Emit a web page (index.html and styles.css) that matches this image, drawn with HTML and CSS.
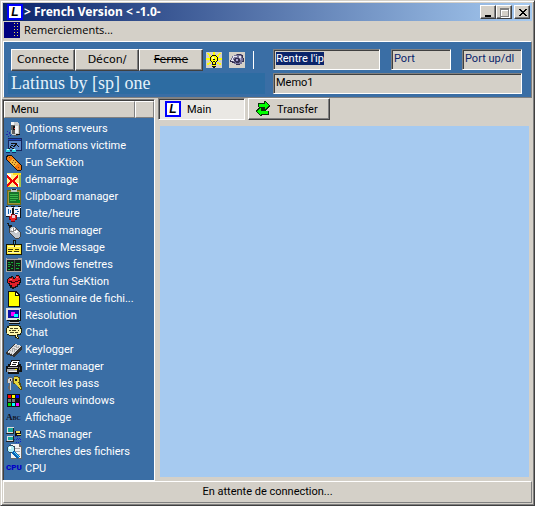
FILE: index.html
```
<!DOCTYPE html>
<html lang="fr">
<head>
<meta charset="utf-8">
<meta name="viewport" content="width=device-width, initial-scale=1">
<title>&gt; French Version &lt; -1.0-</title>
<link rel="stylesheet" href="styles.css">
</head>
<body>
<div class="window">
  <header class="titlebar">
    <span class="logo">L</span>
    <h1 class="title">&gt; French Version &lt; -1.0-</h1>
    <div class="controls">
      <button class="control" aria-label="Minimize"><svg viewBox="0 0 13 11"><path d="M3 8h6v2H3z" fill="#000"/></svg></button>
      <button class="control" aria-label="Maximize" disabled><svg viewBox="0 0 13 11"><path d="M3 2h9v9H3zM4 4v6h7V4z" fill="#fff" fill-rule="evenodd"/><path d="M2 1h9v9H2zM3 3v6h7V3z" fill="#808080" fill-rule="evenodd"/></svg></button>
      <button class="control close" aria-label="Close"><svg viewBox="0 0 13 11"><path d="M3 2h2v1h1v1h2V3h1V2h2v1h-1v1H9v1H8v1h1v1h1v1h1v1H9V8H8V7H6v1H5v1H3V8h1V7h1V6h1V5H5V4H4V3H3z" fill="#000"/></svg></button>
    </div>
  </header>

  <nav class="menubar">
    <svg class="grip" viewBox="0 0 16 16"><path d="M0 0h16v16H0z" fill="#000080"/><path d="M10.500 1v15M13.500 1v15" stroke="#e6dc50" stroke-dasharray="1 2"/></svg>
    <button class="menu-item">Remerciements...</button>
  </nav>

  <section class="toolbar">
    <div class="toolbar-left">
      <div class="actions">
        <button class="push">Connecte</button>
        <button class="push">Décon/</button>
        <button class="push"><s>Ferme</s></button>
        <button class="tool" aria-label="Astuce"><svg class="icon" viewBox="0 0 16 16"><path d="M0 0h16v16H0z" fill="#d4d0c8"/><path d="M7 0h2v3H7zM1 1h2v1h1v1h1v2H3V3H2V2H1zM13 1h2v1h-1v1h-1v2h-2V3h1V2h1zM0 6h4v2H0zM12 6h4v2h-4zM3 10h2v2H3v1H1v-2h2zM11 10h2v1h2v2h-2v-1h-2z" fill="#ff0"/><path d="M6 3h4v1h1v1h1v4h-1v1h-1v5H6v-5H5V9H4V5h1V4h1z" fill="#ff0"/><path d="M6 3h4v1H6zM5 4h1v1H5zM10 4h1v1h-1zM4 5h1v4H4zM11 5h1v4h-1zM5 9h1v1H5zM10 9h1v1h-1zM6 10h1v2H6zM9 10h1v2H9zM6 12h4v1H6zM6 14h4v1H6zM7 15h2v1H7zM7 7h2v1H7zM7 9h2v1H7z" fill="#111"/><path d="M6 5h2v2H6z" fill="#ffffb0"/></svg></button>
        <button class="tool" aria-label="Voir"><svg class="icon" viewBox="0 0 16 16"><path d="M0 0h16v16H0z" fill="#d4d0c8"/><path d="M5 3h2V2h6v1h1v3h1v4h-2v2h-2v1H7v-1H5v-1H3v-1H1V8h1V6h1V4h2z" fill="#77749a"/><path d="M3 6h1V4h4v1H5v1H4v2h3v1H2V8h1zM10 4h2v2h-2z" fill="#e6e6f0"/><path d="M8 2h4v1H8zM12 3h2v3h-1V4h-1zM6 6h4v1h1v3h-1v1H7v-1H6V9H5V7h1zM14 6h1v4h-2V9h1zM1 8h1v1h2v1h2v1H3v-1H1zM7 12h4v1H7z" fill="#343052"/><path d="M7 7h2v2H7zM11 6h1v2h-1z" fill="#aaa5d8"/></svg></button>
        <span class="divider"></span>
      </div>
      <p class="banner">Latinus by [sp] one</p>
    </div>
    <div class="fields">
      <div class="field-row">
        <input class="field ip" id="ip" type="text" value="Rentre l'ip" aria-label="IP">
        <input class="field port" type="text" value="Port" aria-label="Port">
        <input class="field port" type="text" value="Port up/dl" aria-label="Port up/dl">
      </div>
      <input class="field memo" type="text" value="Memo1" aria-label="Memo">
    </div>
  </section>

  <main class="content">
    <aside class="sidebar">
      <div class="list-head"><span class="head-cell">Menu</span><span class="head-cell"></span></div>
      <ul class="list">
        <li><button class="entry"><svg class="icon" viewBox="0 0 16 16"><path d="M5 1h6l2 2v10l-4 2-4-2z" fill="#ccc"/><path d="M5 1h3v4H5zM9 5h3v7H9z" fill="#f4f4f4"/><path d="M5 4h4v9H6V9H5zM13 4h1v9h-1zM8 14h4v1H8z" fill="#606060"/><path d="M7 5h2v4H7zM10 13h4v1h-4z" fill="#111"/><path d="M8 7h1v1H8z" fill="#e44"/><path d="M1 10h1v1H1zM3 11h1v2H3zM0 13h2v1H0zM4 14h1v1H4zM2 15h1v1H2z" fill="#2424a8"/></svg>Options serveurs</button></li>
        <li><button class="entry"><svg class="icon" viewBox="0 0 16 16"><path d="M2 0h14v13H2z" fill="#17265f"/><path d="M3 3h12v9H3z" fill="#5b88c6"/><path d="M2 1h13v1H2z" fill="#1d43c0"/><path d="M4 9l2-2 2 2 2-3 3 3M2 12l3-3 4 3M5 5h6" stroke="#111" fill="none"/><path d="M0 11h4v3H0zM6 11h4v3H6z" fill="#34d6e8"/><path d="M1 11h2v1H1zM7 11h2v1H7z" fill="#dff"/><path d="M0 14h4v1H0zM6 14h4v1H6z" fill="#126"/></svg>Informations victime</button></li>
        <li><button class="entry"><svg class="icon" viewBox="0 0 16 16"><path d="M1 0h4l11 11v3l-2 2h-3L0 5V2z" fill="#111"/><path d="M2 1h3l10 10v3l-1 1h-3L1 5V2z" fill="#f57a10"/><path d="M7 4l5 5-4 3-5-5z" fill="#f4b53a"/><path d="M7 5h1v1H7zM9 7h1v1H9zM6 7h1v1H6zM8 9h1v1H8zM3 2h1v1H3zM12 12h1v1h-1z" fill="#8a4b10"/></svg>Fun SeKtion</button></li>
        <li><button class="entry"><svg class="icon" viewBox="0 0 16 16"><path d="M1 1h14v14H1z" fill="#fff08a"/><path d="M1 2h4v3H1zM9 11h5v3H9z" fill="#fff"/><path d="M7 1h8v2H7zM1 12h3v3H1z" fill="#ffdc20"/><path d="M13 3h2v12h-2z" fill="#a7bf4c"/><path d="M1 4l11 10M12 4L1 14" stroke="#e00" stroke-width="2"/></svg>démarrage</button></li>
        <li><button class="entry"><svg class="icon" viewBox="0 0 16 16"><path d="M1 1h14v15H1z" fill="#716b13"/><path d="M2 2h12v13H2z" fill="#a09640"/><path d="M3 3h10v11H3z" fill="#15712a"/><path d="M5 0h6v3H5z" fill="#bcc8c2"/><path d="M6 0h4v1H6z" fill="#223"/><path d="M4 5h8v1H4zM4 7h8v1H4zM4 9h8v1H4zM4 11h6v1H4z" fill="#3ab64a"/><path d="M11 11h3v3h-3z" fill="#082"/></svg>Clipboard manager</button></li>
        <li><button class="entry"><svg class="icon" viewBox="0 0 16 16"><path d="M0 1h7v10H0zM8 1h7v10H8z" fill="#eef0fb"/><path d="M0 0h2v1H0zM5 0h4v1H5zM12 0h3v1h-3zM6 2h2v9H6zM14 2h1v10h-1zM0 10h5v1H0z" fill="#111"/><path d="M2 3h1v5H2zM4 4h1v3H4zM9 3h3v1H9zM11 5h2v1h-2zM9 7h3v1H9z" fill="#155ea5"/><path d="M5 8h4v1h2v5h-2v2H5v-2H3v-4h2z" fill="#7d0710"/><path d="M5 9h4v1h1v3H9v2H5v-2H4v-3h1z" fill="#ed2024"/><path d="M6 9h3v3H6z" fill="#f2ced3"/></svg>Date/heure</button></li>
        <li><button class="entry"><svg class="icon" viewBox="0 0 16 16"><path d="M1 0h1v2h3v1H3v2h2" stroke="#171717" fill="none"/><path d="M4 4h5l6 6v4l-3 2H9l-6-7V5z" fill="#444"/><path d="M5 4h4l5 6v3l-2 2H9L4 9V5z" fill="#c4c9ce"/><path d="M6 5h3l3 4-2 1-5-3z" fill="#fff"/><path d="M4 8h3V5M8 8l3-2" stroke="#888" fill="none"/></svg>Souris manager</button></li>
        <li><button class="entry"><svg class="icon" viewBox="0 0 16 16"><path d="M0 4h16v11H0z" fill="#161600"/><path d="M1 5h14v9H1z" fill="#ffeb3e"/><path d="M2 6h12v1H2zM2 12h12v1H2z" fill="#fffbb0"/><path d="M2 9h5v1H2zM9 9h4v1H9zM2 11h4v1H2zM8 11h5v1H8z" fill="#363100"/><path d="M7 0h3v5H9v2H8V5H7z" fill="#111"/><path d="M8 1h1v3H8z" fill="#3b93c1"/></svg>Envoie Message</button></li>
        <li><button class="entry"><svg class="icon" viewBox="0 0 16 16"><path d="M0 1h16v14H0z" fill="#a8a8a8"/><path d="M1 3h14v11H1z" fill="#151d18"/><path d="M1 1h11v1H1z" fill="#526788"/><path d="M8 3h1v11H8z" fill="#405048"/><path d="M2 5h2v1H2zM5 5h2v1H5zM2 7h3v1H2zM6 8h1v1H6zM2 9h2v1H2zM5 11h2v1H5zM2 12h2v1H2zM10 6h4v1h-4zM10 8h1v1h-1zM12 8h2v1h-2zM10 11h3v1h-3z" fill="#16ad34"/></svg>Windows fenetres</button></li>
        <li><button class="entry"><svg class="icon" viewBox="0 0 16 16"><path d="M2 4h1V3h2V2h2v1h1v1h1V3h1V1h3v1h1v2h1v5h-1v2h-2v2h-2v1H8v1H6v-1H4v-2H3v-2H2V9H1V5h1z" fill="#111"/><path d="M3 4h3V3h1v2h2V4h1V2h3v2h1v4h-1v2h-2v2H9v1H6v-2H4V9H2V5h1z" fill="#e01f28"/><path d="M3 7h3v1h3V7h3V6h2v1h-2v1H9v1H5V8H3z" fill="#3e0007"/><path d="M10 3h2v1h-2zM4 5h2v1H4z" fill="#ff6a6a"/></svg>Extra fun SeKtion</button></li>
        <li><button class="entry"><svg class="icon" viewBox="0 0 16 16"><path d="M2 0h8l4 4v12H2z" fill="#111"/><path d="M3 1h6v4h4v10H3z" fill="#ff0"/><path d="M10 2l2 2h-2z" fill="#ffffa8"/></svg>Gestionnaire de fichi...</button></li>
        <li><button class="entry"><svg class="icon" viewBox="0 0 16 16"><path d="M0 0h15v12H0z" fill="#e1e1e1"/><path d="M14 1h1v12H1v-1h13zM4 13h9v1H4zM3 15h11v1H3z" fill="#111"/><path d="M2 2h11v8H2z" fill="#1010a5"/><path d="M5 4h4v4H5z" fill="#f0f"/><path d="M8 6h4v3H8z" fill="#0ff"/><path d="M3 14h10v1H3z" fill="#ccc"/><path d="M11 11h2v1h-2z" fill="#0a0"/></svg>Résolution</button></li>
        <li><button class="entry"><svg class="icon" viewBox="0 0 16 16"><path d="M3 0h10v1h2v2h1v5h-1v2h-3v2h1v2h-2v-1H9v-2H3v-1H1V8H0V3h1V1h2z" fill="#22220c"/><path d="M3 1h10v1h1v2h1v4h-1v1h-3v3h1v1h-1v-1h-1v-2H3V9H1V3h2z" fill="#fff8ad"/><path d="M4 3h3v1H4zM8 3h4v1H8zM3 5h2v1H3zM6 5h4v1H6zM12 5h1v1h-1zM4 7h4v1H4zM9 7h3v1H9z" fill="#48421c"/></svg>Chat</button></li>
        <li><button class="entry"><svg class="icon" viewBox="0 0 16 16"><path d="M9 2l7 2v3l-8 8-8-3v-2z" fill="#333"/><path d="M9 2l6 2-8 9-6-3z" fill="#e0e0e0"/><path d="M8 4l5 2M6 6l5 2M4 8l5 2M11 3L3 11M13 4l-8 8" stroke="#aaa" stroke-dasharray="1 1"/></svg>Keylogger</button></li>
        <li><button class="entry"><svg class="icon" viewBox="0 0 16 16"><path d="M5 1h9v1h-1v3h2v2h1v6h-3v2H2v-2H0V7h2V5h2z" fill="#111"/><path d="M6 2h7l-2 5H4z" fill="#fff"/><path d="M7 3h4v1H7zM6 5h4v1H6z" fill="#222"/><path d="M2 8h10v1H2zM1 10h10v3H1z" fill="#aaa"/><path d="M3 12h8v1H3z" fill="#eee"/><path d="M13 8h1v3h-1z" fill="#666"/><path d="M9 10h2v1H9z" fill="#ff0"/></svg>Printer manager</button></li>
        <li><button class="entry"><svg class="icon" viewBox="0 0 16 16"><path d="M2 1h4v1h2v4H6l-1 3v6H3v-2H2v-3h1V7H1V3h1z" fill="#666"/><path d="M3 2h3v3H5v9H4V7H2V3h1z" fill="#d2d2d2"/><path d="M8 0h4v1h2v5l2 5v3h-2l-4-6H7V2h1z" fill="#544b14"/><path d="M8 1h4v1h1v4h-1l3 6v1h-1L9 7H8z" fill="#e7d63e"/><path d="M4 3h1v2H4zM9 3h2v2H9z" fill="#222"/></svg>Recoit les pass</button></li>
        <li><button class="entry"><svg class="icon" viewBox="0 0 16 16"><path d="M1 1h13v13H1z" fill="#111"/><path d="M2 2h3v3H2z" fill="#f00"/><path d="M6 2h3v3H6z" fill="#ff0"/><path d="M10 2h3v3h-3z" fill="#00f"/><path d="M2 6h3v3H2z" fill="#777"/><path d="M6 6h3v3H6z" fill="#777"/><path d="M10 6h3v3h-3z" fill="#111"/><path d="M2 10h3v3H2z" fill="#0d0"/><path d="M6 10h3v3H6z" fill="#0ff"/><path d="M10 10h3v3h-3z" fill="#f0f"/></svg>Couleurs windows</button></li>
        <li><button class="entry"><span class="icon glyph abc">Abc</span>Affichage</button></li>
        <li><button class="entry"><svg class="icon" viewBox="0 0 16 16"><path d="M1 0h7v6H1zM1 9h7v5H1z" fill="#ddd"/><path d="M2 1h5v4H2zM2 10h5v3H2z" fill="#18a99b"/><path d="M0 6h8v1H0zM7 1h1v5H7zM0 14h8v1H0zM7 9h1v5H7z" fill="#222"/><path d="M9 4h6v5H9z" fill="#111"/><path d="M10 4h4v2h-4zM11 7h4v1h-4z" fill="#f3df55"/><path d="M9 9h2v2h3v4H9M8 12h8" stroke="#1422c1" stroke-dasharray="1 1" fill="none"/></svg>RAS manager</button></li>
        <li><button class="entry"><svg class="icon" viewBox="0 0 16 16"><path d="M5 0h9l2 3v12H5z" fill="#686868"/><path d="M5 0h8v3h2v11H5z" fill="#f2f2f2"/><path d="M7 4h7v1H7zM8 7h6v1H8zM10 10h4v1h-4z" fill="#aaa"/><path d="M3 1h4v1h2v5H7v2H3V7H1V3h2z" fill="#30485c"/><path d="M3 2h4v1h1v4H7v1H3V7H2V3h1z" fill="#b4eff8"/><path d="M3 3h2v2H3z" fill="#fff"/><path d="M7 8l6 6" stroke="#0763b5" stroke-width="3"/><path d="M8 8l5 5" stroke="#54d5ff"/></svg>Cherches des fichiers</button></li>
        <li><button class="entry"><span class="icon glyph cpu">CPU</span>CPU</button></li>
      </ul>
    </aside>

    <section class="workspace">
      <div class="tabs">
        <button class="tab active"><span class="logo">L</span>Main</button>
        <button class="tab"><svg class="icon" viewBox="0 0 16 16"><path d="M9 0h2v1h1v1h1v1h1v1h1v2h-1v1h-1v1h-1v1h-1v1h3v4H7v1H5v-1H4v-1H3v-1H2v-1H1V9h1V8h1V7h1V6H3V2h6z" fill="#0b2b0b"/><path d="M10 1h1v1h1v1h1v1h1v1h-1v1h-1v1h-1v1h-1V6H4V3h6zM5 7h1v3h7v3H6v1H5v-1H4v-1H3v-1H2v-1h1V9h1V8h1z" fill="#0f0"/></svg>Transfer</button>
      </div>
      <div class="canvas"></div>
    </section>
  </main>

  <footer class="status">En attente de connection...</footer>
</div>
<script src="app.js"></script>
</body>
</html>
```
FILE: styles.css
```
* {
  box-sizing: border-box;
}

body {
  margin: 0;
  background: #d4d0c8;
  color: #000;
  font: 11px/13px Roboto, Arial, sans-serif;
}

button,
input {
  margin: 0;
  padding: 0;
  border: 0;
  border-radius: 0;
  font: inherit;
  color: inherit;
  outline: 0;
}

svg {
  display: block;
  shape-rendering: crispEdges;
}

.window {
  display: flex;
  flex-direction: column;
  min-height: 100vh;
  padding: 1px;
  border: 1px solid;
  border-color: #d4d0c8 #404040 #404040 #d4d0c8;
  box-shadow: inset 1px 1px #fff, inset -1px -1px #808080;
}

.titlebar {
  display: flex;
  align-items: center;
  gap: 1px;
  height: 18px;
  margin: 1px;
  padding: 0 2px 0 4px;
  background: linear-gradient(90deg, #0a246a, #a6caf0);
  color: #fff;
}

.logo {
  flex: none;
  width: 16px;
  height: 16px;
  border: 2px solid #00f;
  background: #fff;
  color: #000;
  font: italic bold 12px/12px "Liberation Sans", Arial, sans-serif;
  text-align: center;
}

.title {
  flex: 1;
  margin: 0;
  font: bold 12px/16px "Noto Sans", Tahoma, sans-serif;
}

.controls {
  display: flex;
}

.control {
  width: 16px;
  height: 14px;
  padding: 1px;
  background: #d4d0c8;
  border: 1px solid;
  border-color: #fff #404040 #404040 #fff;
  box-shadow: inset -1px -1px #808080;
}

.control svg {
  width: 13px;
  height: 11px;
}

.close {
  margin-left: 2px;
}

.menubar {
  display: flex;
  align-items: flex-start;
  gap: 4px;
  height: 19px;
  padding: 0 2px;
}

.grip {
  width: 16px;
  height: 16px;
}

.menu-item {
  background: none;
  font: 11px/16px "Open Sans", Tahoma, sans-serif;
}

.toolbar {
  display: flex;
  gap: 8px;
  margin: 0 1px;
  padding: 7px 9px 3px 4px;
  background: #3a6ea5;
  border: 1px solid;
  border-color: #fff #808080 #808080 #fff;
}

.toolbar-left {
  flex: 1;
}

.actions {
  display: flex;
  align-items: center;
  height: 22px;
  padding-left: 3px;
}

.push {
  width: 64px;
  height: 22px;
  background: #d4d0c8;
  border: 1px solid;
  border-color: #fff #404040 #404040 #fff;
  box-shadow: inset -1px -1px #808080;
  font: 11px/18px "DejaVu Sans", Verdana, sans-serif;
}

.tool {
  width: 16px;
  height: 16px;
  margin-left: 3px;
}

.tool + .tool {
  margin-left: 7px;
}

.divider {
  width: 1px;
  height: 18px;
  margin-left: 8px;
  background: #fff;
}

.banner {
  height: 21px;
  margin: 2px 0 0;
  padding-left: 3px;
  background: #2d6ca2;
  color: #e4f1fa;
  font: 18px/21px "Liberation Serif", Palatino, serif;
}

.fields {
  display: flex;
  flex-direction: column;
  gap: 3px;
  width: 249px;
}

.field-row {
  display: flex;
  justify-content: space-between;
}

.field {
  height: 21px;
  padding: 0 2px 2px;
  background: #d4d0c8;
  border: 1px solid;
  border-color: #808080 #fff #fff #808080;
  box-shadow: inset 1px 1px #404040;
  color: #0a246a;
}

.field::selection {
  background: #0a246a;
  color: #fff;
}

.ip {
  width: 107px;
}

.port {
  width: 60px;
}

.memo {
  width: 100%;
  color: #000;
}

.content {
  display: flex;
  flex: 1;
  gap: 3px;
  padding: 0 1px 0 0;
}

.sidebar {
  width: 153px;
  margin-top: 1px;
  background: #3a6ea5;
  border: 1px solid;
  border-color: #808080 #fff #fff #808080;
  box-shadow: inset 1px 1px #404040;
  padding: 1px 0 1px 1px;
}

.list-head {
  display: flex;
  height: 17px;
}

.head-cell {
  padding: 1px 6px;
  background: #d4d0c8;
  border: 1px solid;
  border-color: #fff #808080 #808080 #fff;
}

.head-cell:first-child {
  width: 131px;
}

.head-cell:last-child {
  flex: 1;
}

.list {
  margin: 0;
  padding: 2px 0 0 2px;
  list-style: none;
}

.entry {
  display: flex;
  align-items: center;
  gap: 3px;
  width: 100%;
  height: 17px;
  background: none;
  color: #fff;
  white-space: nowrap;
}

.icon {
  flex: none;
  width: 16px;
  height: 16px;
}

.glyph {
  line-height: 14px;
  text-align: left;
}

.abc {
  color: #112;
  font-family: "Liberation Serif", serif;
  font-size: 9px;
  font-weight: bold;
  font-variant: small-caps;
}

.cpu {
  color: #0000c8;
  font-size: 8px;
  font-weight: 900;
}

.workspace {
  display: flex;
  flex: 1;
  flex-direction: column;
  gap: 6px;
  padding: 0 3px 4px 0;
}

.tabs {
  display: flex;
  gap: 3px;
}

.tab {
  display: flex;
  align-items: center;
  gap: 6px;
  width: 82px;
  height: 22px;
  padding: 0 6px;
  background: #d4d0c8;
  border: 1px solid;
  border-color: #fff #404040 #404040 #fff;
  box-shadow: inset -1px -1px #808080;
}

.tab.active {
  width: 87px;
  background: #eae8e4;
  border-color: #808080 #fff #fff #808080;
  box-shadow: inset 1px 1px #404040;
}

.canvas {
  flex: 1;
  margin-left: 2px;
  background: #a6caf0;
}

.status {
  height: 22px;
  margin: 0 1px 1px;
  border: 1px solid;
  border-color: #fff #808080 #808080 #fff;
  line-height: 20px;
  text-align: center;
}
```
FILE: app.js
```
const ip = document.getElementById("ip");
ip.focus();
ip.select();
```
